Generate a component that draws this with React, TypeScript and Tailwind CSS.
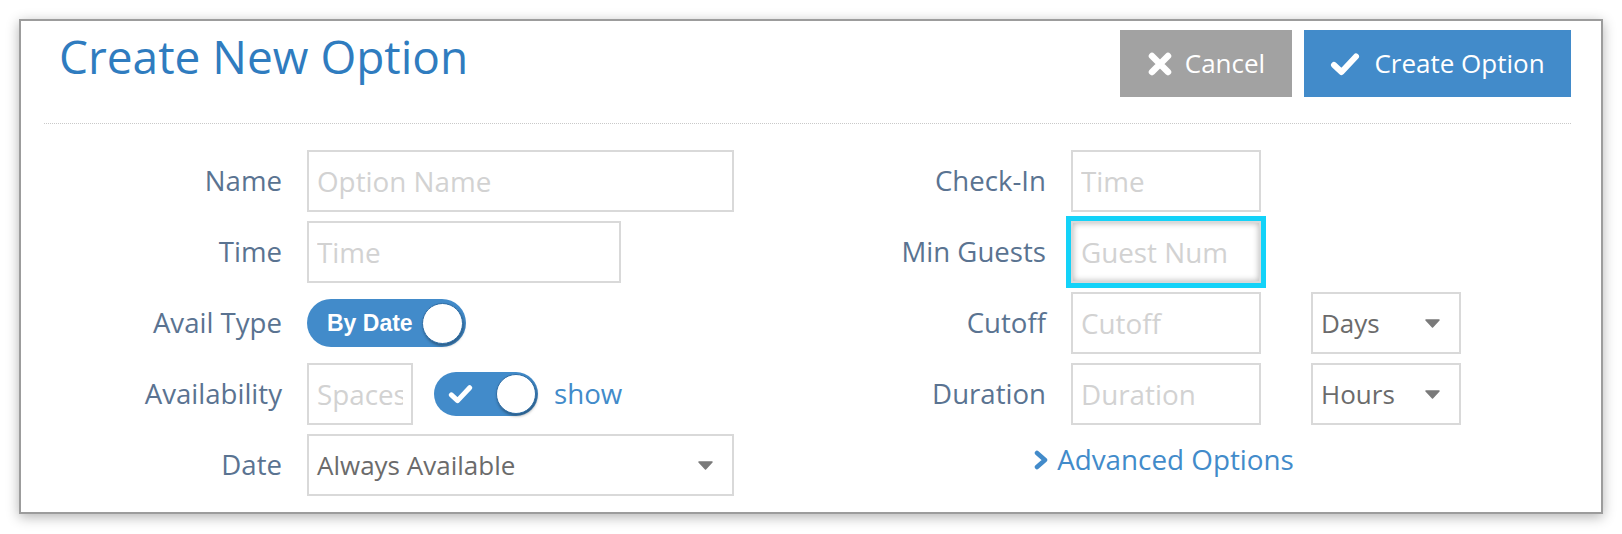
import React from "react";

const labelCls =
  "text-right text-[27.6px] text-[#5a7391] font-['Open_Sans',sans-serif] leading-none";
const inputCls =
  "h-[62px] border-2 border-[#d9d9d9] bg-white px-[8px] text-[27.8px] text-[#666] font-['Open_Sans',sans-serif] placeholder:text-[#d2d2d2] outline-none";

function Caret() {
  return (
    <svg width="15" height="9" viewBox="0 0 15 9">
      <path d="M1 1 L14 1 L7.5 8 Z" fill="#7a7a7a" stroke="#7a7a7a" strokeWidth="1.5" strokeLinejoin="round" />
    </svg>
  );
}

function SelectBox({ value, width }: { value: string; width: string }) {
  return (
    <div
      className={`${width} h-[62px] border-2 border-[#d9d9d9] bg-white pl-[8px] pr-[19px] flex items-center justify-between text-[26px] text-[#6b6b6b] font-['Open_Sans',sans-serif]`}
    >
      <span>{value}</span>
      <Caret />
    </div>
  );
}

function CheckIcon({ w, h, sw }: { w: number; h: number; sw: number }) {
  return (
    <svg width={w} height={h} viewBox="0 0 30 24">
      <polyline
        points="4,13 11.5,20 26,4.5"
        fill="none"
        stroke="white"
        strokeWidth={sw}
        strokeLinecap="round"
        strokeLinejoin="round"
      />
    </svg>
  );
}

function Row({ label, children }: { label: string; children: React.ReactNode }) {
  return (
    <div className="flex items-center h-[62px]">
      <div className={`${labelCls} w-[238px] mr-[25px]`}>{label}</div>
      {children}
    </div>
  );
}

function RightRow({ label, children }: { label: string; children: React.ReactNode }) {
  return (
    <div className="flex items-center h-[62px]">
      <div className={`${labelCls} w-[180px] mr-[25px]`}>{label}</div>
      {children}
    </div>
  );
}

export default function App() {
  return (
    <div className="bg-white w-[1622px] h-[534px] pl-[19px] pt-[19px]">
      <div className="w-[1584px] h-[495px] bg-white border-2 border-[#9c9c9c] shadow-[0_3px_12px_rgba(0,0,0,0.3)]">
        <div className="ml-[23px] w-[1527px]">
          {/* header */}
          <div className="flex justify-between items-start pt-[9px]">
            <h1 className="pl-[15px] mt-[3px] text-[46px] leading-none text-[#2f7cbf] font-['Open_Sans',sans-serif] font-normal">
              Create New Option
            </h1>
            <div className="flex gap-[12px]">
              <button className="h-[67px] w-[172px] bg-[#a2a2a2] flex items-center justify-center gap-[12px] text-white text-[26px] font-['Open_Sans',sans-serif]">
                <svg width="26" height="26" viewBox="0 0 26 26">
                  <path d="M5 5 L21 21 M21 5 L5 21" stroke="white" strokeWidth="6.5" strokeLinecap="round" />
                </svg>
                <span>Cancel</span>
              </button>
              <button className="h-[67px] w-[267px] bg-[#428bca] flex items-center justify-center gap-[14px] text-white text-[26px] font-['Open_Sans',sans-serif]">
                <CheckIcon w={30} h={24} sw={6} />
                <span>Create Option</span>
              </button>
            </div>
          </div>
          <div className="mt-[26px] border-t border-dotted border-[#c9c9c9]" />

          {/* form */}
          <div className="flex mt-[26px]">
            <div className="flex flex-col gap-[9px]">
              <Row label="Name">
                <input className={`${inputCls} w-[427px]`} placeholder="Option Name" />
              </Row>
              <Row label="Time">
                <input className={`${inputCls} w-[314px]`} placeholder="Time" />
              </Row>
              <Row label="Avail Type">
                <div className="w-[159px] h-[48px] rounded-full bg-[#428bca] flex items-center justify-between pl-[20px] pr-[3px]">
                  <span className="text-white text-[23px] font-bold font-['Liberation_Sans',Arial,sans-serif]">By Date</span>
                  <span className="w-[41px] h-[41px] rounded-full bg-white border border-[#2d6da6] shadow-[1px_2px_3px_rgba(0,0,0,0.35)]" />
                </div>
              </Row>
              <Row label="Availability">
                <input className={`${inputCls} w-[106px]`} placeholder="Spaces" />
                <div className="ml-[21px] w-[104px] h-[44px] rounded-full bg-[#428bca] flex items-center justify-between pl-[14px] pr-[2px]">
                  <CheckIcon w={25} h={20} sw={6} />
                  <span className="w-[40px] h-[40px] rounded-full bg-white border border-[#2d6da6] shadow-[1px_2px_3px_rgba(0,0,0,0.35)]" />
                </div>
                <span className="ml-[16px] text-[27.7px] text-[#428bca] font-['Open_Sans',sans-serif]">show</span>
              </Row>
              <Row label="Date">
                <SelectBox value="Always Available" width="w-[427px]" />
              </Row>
            </div>

            <div className="ml-[132px] flex flex-col gap-[9px]">
              <RightRow label="Check-In">
                <input className={`${inputCls} w-[190px]`} placeholder="Time" />
              </RightRow>
              <RightRow label="Min Guests">
                <input
                  className={`${inputCls} w-[190px] outline-[5px] outline-solid outline-[#13d2f8] shadow-[inset_0_0_6px_rgba(0,0,0,0.3)]`}
                  placeholder="Guest Num"
                />
              </RightRow>
              <RightRow label="Cutoff">
                <input className={`${inputCls} w-[190px]`} placeholder="Cutoff" />
                <div className="ml-[50px]">
                  <SelectBox value="Days" width="w-[150px]" />
                </div>
              </RightRow>
              <RightRow label="Duration">
                <input className={`${inputCls} w-[190px]`} placeholder="Duration" />
                <div className="ml-[50px]">
                  <SelectBox value="Hours" width="w-[150px]" />
                </div>
              </RightRow>
              <div className="h-[62px] w-[595px] flex items-center justify-center gap-[8px] pb-[10px] text-[27.8px] text-[#428bca] font-['Open_Sans',sans-serif]">
                <svg width="16" height="20" viewBox="0 0 16 20">
                  <polyline points="4,3 12,10 4,17" fill="none" stroke="#428bca" strokeWidth="4.5" strokeLinecap="round" strokeLinejoin="round" />
                </svg>
                <span>Advanced Options</span>
              </div>
            </div>
          </div>
        </div>
      </div>
    </div>
  );
}
